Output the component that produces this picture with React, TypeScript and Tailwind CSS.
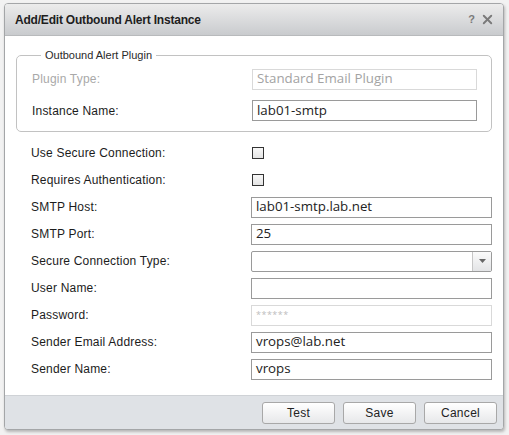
import { X } from 'lucide-react';

const labelFont = { fontFamily: '"Liberation Sans", Arial, sans-serif' };
const valueFont = { fontFamily: '"Open Sans", "Noto Sans", sans-serif' };

function TextBox({ value, muted, placeholder }: { value?: string; muted?: boolean; placeholder?: string }) {
  return (
    <div
      className={
        'h-[21px] w-full flex items-center px-[4px] text-[13.3px] bg-white border ' +
        (muted ? 'border-[#d9d9d9] text-[#a3a3a3]' : 'border-[#9a9a9a] text-[#222]')
      }
      style={valueFont}
    >
      {value}
      {placeholder && <span className="text-[9px] text-[#bdbdbd] tracking-[0.5px]">{placeholder}</span>}
    </div>
  );
}

function Row({ label, children }: { label: string; children: React.ReactNode }) {
  return (
    <div className="flex items-center h-[21px]">
      <div className="w-[235px] shrink-0 pl-[15px] text-[12px] tracking-[0.2px] text-[#1c1c1c]" style={labelFont}>
        {label}
      </div>
      <div className="flex-1 flex items-center">{children}</div>
    </div>
  );
}

function Checkbox() {
  return <div className="ml-[1px] w-[12px] h-[12px] border border-[#333] bg-gradient-to-b from-[#f8f8f8] to-[#e4e4e4]" />;
}

function Button({ label }: { label: string }) {
  return (
    <button
      className="w-[73px] h-[22px] rounded-[3px] border border-[#a8a8a8] bg-gradient-to-b from-[#ffffff] to-[#e7e8ea] text-[12px] tracking-[0.3px] text-[#222]"
      style={labelFont}
    >
      {label}
    </button>
  );
}

export default function App() {
  return (
    <div className="w-[509px] h-[435px] bg-[#f2f2f2] pt-[3px] pl-[4px]">
      <div className="w-[500px] h-[427px] flex flex-col rounded-[4px] border border-[#a4a6a8] bg-white shadow-[1px_2px_3px_rgba(0,0,0,0.25)] overflow-hidden">
        <div className="h-[32px] flex items-center justify-between pl-[10px] pr-[8px] bg-gradient-to-b from-[#ececec] to-[#c9cbce] border-b border-[#b8babc]">
          <span className="text-[12px] font-bold tracking-[-0.2px] text-[#1e1e1e]" style={labelFont}>
            Add/Edit Outbound Alert Instance
          </span>
          <div className="flex items-center gap-[5px] text-[#7a7a7a]">
            <span className="text-[11px] font-bold" style={labelFont}>?</span>
            <X className="w-[15px] h-[15px]" strokeWidth={3} />
          </div>
        </div>

        <div className="flex-1 flex flex-col px-[11px] pt-[11px]">
          <fieldset className="border border-[#c2c2c2] rounded-[5px] pl-[15px] pr-[14px] pt-[5px] pb-[10px] flex flex-col gap-[11px]">
            <legend className="ml-[9px] px-[4px] text-[11px] text-[#2a2a2a]" style={labelFont}>
              Outbound Alert Plugin
            </legend>
            <div className="flex items-center h-[21px]">
              <div className="w-[220px] shrink-0 text-[12px] tracking-[0.2px] text-[#a9a9a9]" style={labelFont}>Plugin Type:</div>
              <TextBox value="Standard Email Plugin" muted />
            </div>
            <div className="flex items-center h-[20px]">
              <div className="w-[220px] shrink-0 text-[12px] tracking-[0.2px] text-[#1c1c1c]" style={labelFont}>Instance Name:</div>
              <TextBox value="lab01-smtp" />
            </div>
          </fieldset>

          <div className="flex flex-col gap-[6px] pt-[11px]">
            <Row label="Use Secure Connection:"><Checkbox /></Row>
            <Row label="Requires Authentication:"><Checkbox /></Row>
            <Row label="SMTP Host:"><TextBox value="lab01-smtp.lab.net" /></Row>
            <Row label="SMTP Port:"><TextBox value="25" /></Row>
            <Row label="Secure Connection Type:">
              <div className="h-[21px] w-full flex border border-[#9a9a9a] rounded-[2px] bg-white">
                <div className="flex-1" />
                <div className="w-[19px] flex items-center justify-center bg-gradient-to-b from-[#fbfbfb] to-[#e3e4e6] border-l border-[#c6c6c6]">
                  <svg width="7" height="4" viewBox="0 0 7 4">
                    <path d="M0 0 L7 0 L3.5 4 Z" fill="#666" />
                  </svg>
                </div>
              </div>
            </Row>
            <Row label="User Name:"><TextBox value="" /></Row>
            <Row label="Password:"><TextBox placeholder="******" muted /></Row>
            <Row label="Sender Email Address:"><TextBox value="vrops@lab.net" /></Row>
            <Row label="Sender Name:"><TextBox value="vrops" /></Row>
          </div>
        </div>

        <div className="h-[34px] flex items-center justify-end gap-[8px] pr-[6px] pt-[1px] bg-[#dfe2e6] border-t border-[#cfd2d6]">
          <Button label="Test" />
          <Button label="Save" />
          <Button label="Cancel" />
        </div>
      </div>
    </div>
  );
}
